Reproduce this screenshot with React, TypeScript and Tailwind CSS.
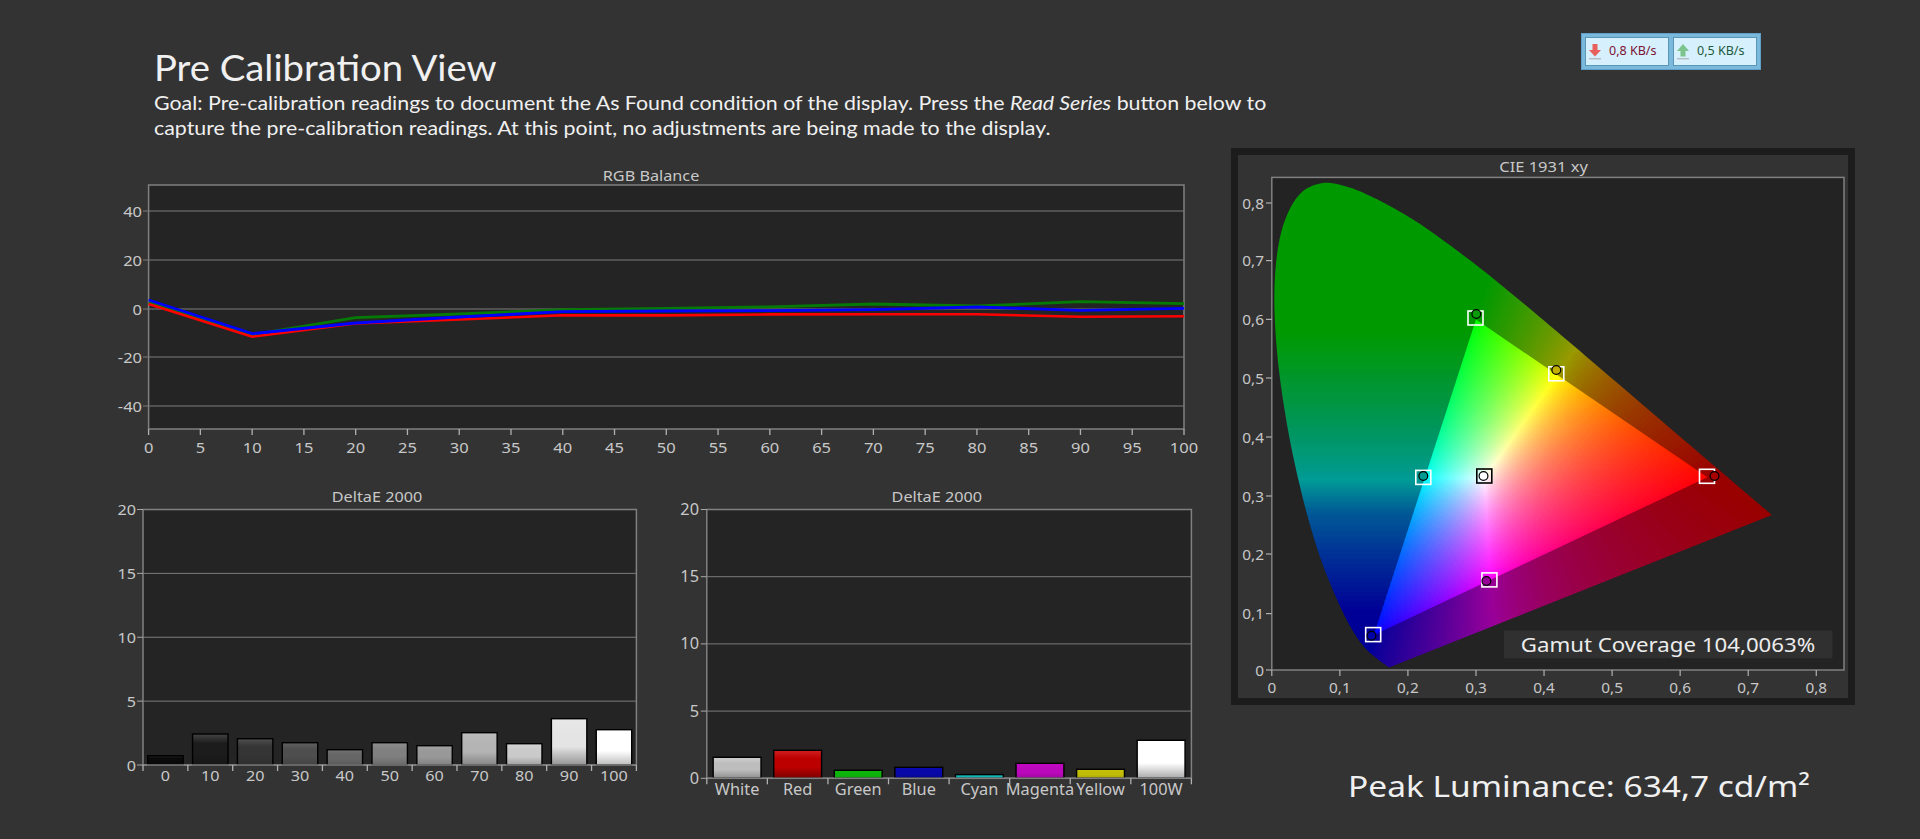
import type { ReactNode } from 'react'

const LABEL_FONT = '"Noto Sans", "Open Sans", sans-serif'

type Rgb = [number, number, number]
type Pt = [number, number]

// CIE 1931 spectral locus, xy
const LOCUS: Pt[] = [
  [0.1741, 0.005], [0.1714, 0.0051], [0.1644, 0.0109], [0.1566, 0.0177], [0.144, 0.0297], [0.1355, 0.0399],
  [0.1241, 0.0578], [0.1096, 0.0868], [0.0913, 0.1327], [0.0687, 0.2007], [0.0454, 0.295], [0.0235, 0.4127],
  [0.0082, 0.5384], [0.0039, 0.6548], [0.0139, 0.7502], [0.0389, 0.812], [0.0743, 0.8338], [0.1142, 0.8262],
  [0.1547, 0.8059], [0.1929, 0.7816], [0.2296, 0.7543], [0.3016, 0.6923], [0.3731, 0.6245], [0.4441, 0.5547],
  [0.5125, 0.4866], [0.5752, 0.4242], [0.627, 0.3725], [0.6658, 0.334], [0.6915, 0.3083], [0.7347, 0.2653],
]

function smooth(pts: Pt[]) {
  const out: Pt[] = []
  for (let i = 0; i < pts.length - 1; i++) {
    const p0 = pts[Math.max(i - 1, 0)]
    const p1 = pts[i]
    const p2 = pts[i + 1]
    const p3 = pts[Math.min(i + 2, pts.length - 1)]
    for (let s = 0; s < 8; s++) {
      const t = s / 8
      const t2 = t * t
      const t3 = t2 * t
      out.push([
        0.5 * (2 * p1[0] + (p2[0] - p0[0]) * t + (2 * p0[0] - 5 * p1[0] + 4 * p2[0] - p3[0]) * t2 + (3 * p1[0] - p0[0] - 3 * p2[0] + p3[0]) * t3),
        0.5 * (2 * p1[1] + (p2[1] - p0[1]) * t + (2 * p0[1] - 5 * p1[1] + 4 * p2[1] - p3[1]) * t2 + (3 * p1[1] - p0[1] - 3 * p2[1] + p3[1]) * t3),
      ])
    }
  }
  out.push(pts[pts.length - 1])
  return out
}

const cieX = (x: number) => 1271.8 + x * 680.6
const cieY = (y: number) => 670 - y * 584

// tick rows as they sit in the picture, 0 to 0,8
const CIE_TICKS_Y = [670, 613.6, 554, 496, 437, 378, 319.4, 260.6, 203]

const LEFT_BANDS: [number, Rgb][] = [
  [0.9, [0, 153, 0]],
  [0.58, [0, 153, 0]],
  [0.45, [0, 150, 70]],
  [0.36, [0, 152, 125]],
  [0.325, [0, 155, 150]],
  [0.27, [0, 90, 150]],
  [0.2, [0, 50, 150]],
  [0.1, [0, 0, 150]],
  [0, [0, 0, 150]],
]

function cieColor(x: number, y: number, bright: boolean): Rgb {
  const X = x / y
  const Z = (1 - x - y) / y
  const r = 3.2406 * X - 1.5372 - 0.4986 * Z
  const g = -0.9689 * X + 1.8758 + 0.0415 * Z
  const b = 0.0557 * X - 0.204 + 1.057 * Z

  if (!bright && r < 0) {
    for (let i = 1; i < LEFT_BANDS.length; i++) {
      const [y0, c0] = LEFT_BANDS[i - 1]
      const [y1, c1] = LEFT_BANDS[i]
      if (y >= y1) {
        const t = (y - y1) / (y0 - y1)
        return [c1[0] + (c0[0] - c1[0]) * t, c1[1] + (c0[1] - c1[1]) * t, c1[2] + (c0[2] - c1[2]) * t]
      }
    }
    return [0, 0, 150]
  }

  const dim = bright ? 1 : 0.6
  const cr = Math.max(r, 0)
  const cg = Math.max(g, 0)
  const cb = Math.max(b, 0)
  const m = Math.max(cr, cg, cb)
  const p = 0.85
  return [255 * dim * Math.pow(cr / m, p), 255 * dim * Math.pow(cg / m, p), 255 * dim * Math.pow(cb / m, p)]
}

function buildCells(bright: boolean, x0: number, x1: number, y0: number, y1: number) {
  const cells: { x: number; y: number; w: number; fill: string }[] = []
  const step = 2
  for (let py = y0; py < y1; py += step) {
    let start = x0
    let last = ''
    for (let px = x0; px <= x1; px += step) {
      const x = (px + 1 - 1271.8) / 680.6
      const y = (670 - py - 1) / 584
      const [r, g, b] = cieColor(x, Math.max(y, 0.002), bright)
      const fill = `rgb(${Math.round(r / 3) * 3},${Math.round(g / 3) * 3},${Math.round(b / 3) * 3})`
      if (fill !== last) {
        if (last) cells.push({ x: start, y: py, w: px - start, fill: last })
        start = px
        last = fill
      }
    }
    cells.push({ x: start, y: py, w: x1 + step - start, fill: last })
  }
  return cells
}

const dimCells = buildCells(false, 1272, 1780, 180, 672)
const brightCells = buildCells(true, 1366, 1714, 312, 642)

const RGB_X = (v: number) => 148.6 + v * 10.354
const greenLine: Pt[] = [[0, 302.6], [10, 334.7], [20, 317.7], [30, 314], [40, 309.7], [50, 308.3], [60, 306.8], [70, 304], [80, 306], [90, 301.7], [100, 303.7]]
const redLine: Pt[] = [[0, 304], [10, 336.7], [20, 323.5], [30, 319.5], [40, 315.3], [50, 315.4], [60, 314.4], [70, 314.3], [80, 314.3], [90, 316.7], [100, 316.3]]
const blueLine: Pt[] = [[0, 300], [10, 333.7], [20, 323], [30, 317], [40, 311.7], [50, 311], [60, 310.6], [70, 309.7], [80, 307], [90, 310.3], [100, 308.3]]

const line = (pts: Pt[]) => pts.map(([v, y]) => `${RGB_X(v)},${y}`).join(' ')

const grayBars = [
  { label: '0', h: 9.3, top: '#222222', mid: '#0a0a0a', bottom: '#050505' },
  { label: '10', h: 31, top: '#444444', mid: '#1c1c1c', bottom: '#161616' },
  { label: '20', h: 26.3, top: '#505050', mid: '#353535', bottom: '#2e2e2e' },
  { label: '30', h: 22.3, top: '#606060', mid: '#4e4e4e', bottom: '#444444' },
  { label: '40', h: 15.3, top: '#747474', mid: '#666666', bottom: '#5a5a5a' },
  { label: '50', h: 22.3, top: '#8e8e8e', mid: '#808080', bottom: '#6a6a6a' },
  { label: '60', h: 19.3, top: '#a2a2a2', mid: '#989898', bottom: '#808080' },
  { label: '70', h: 32.3, top: '#bcbcbc', mid: '#b4b4b4', bottom: '#858585' },
  { label: '80', h: 21.3, top: '#d2d2d2', mid: '#cacaca', bottom: '#a0a0a0' },
  { label: '90', h: 46.3, top: '#e8e8e8', mid: '#e4e4e4', bottom: '#959595' },
  { label: '100', h: 35.3, top: '#ffffff', mid: '#ffffff', bottom: '#bdbdbd' },
]

const colorBars = [
  { label: 'White', h: 21, top: '#cfcfcf', mid: '#bdbdbd', bottom: '#8e8e8e' },
  { label: 'Red', h: 28, top: '#d02020', mid: '#bc0000', bottom: '#7c0000' },
  { label: 'Green', h: 8, top: '#0cbc0c', mid: '#0cb40c', bottom: '#08a008' },
  { label: 'Blue', h: 11, top: '#0808b4', mid: '#0808a8', bottom: '#06068c' },
  { label: 'Cyan', h: 3.7, top: '#10b8b8', mid: '#10b8b8', bottom: '#10b8b8' },
  { label: 'Magenta', h: 15, top: '#c408c4', mid: '#bc08bc', bottom: '#a008a0' },
  { label: 'Yellow', h: 9, top: '#c8c408', mid: '#c0bc08', bottom: '#a8a408' },
  { label: '100W', h: 38, top: '#ffffff', mid: '#ffffff', bottom: '#a8a8a8' },
]

type Bar = { label: string; h: number; top: string; mid: string; bottom: string }

function Label({ x, y, size, anchor = 'middle', stretch = 1.1, fill = '#c8c8c8', children }: {
  x: number
  y: number
  size: number
  anchor?: 'start' | 'middle' | 'end'
  stretch?: number
  fill?: string
  children: ReactNode
}) {
  return (
    <text transform={`translate(${x} ${y}) scale(${stretch} 1)`} textAnchor={anchor} fontSize={size} fill={fill}>
      {children}
    </text>
  )
}

function BarChart({ id, viewX, left, right, bottom, titleX, labelEnd, labelBaseline, labelSize, stretch, bars }: {
  id: string
  viewX: number
  left: number
  right: number
  bottom: number
  titleX: number
  labelEnd: number
  labelBaseline: number
  labelSize: number
  stretch: number
  bars: Bar[]
}) {
  const top = 509.5
  const cw = (right - left) / bars.length
  return (
    <svg width={560} height={320} viewBox={`${viewX} 480 560 320`} style={{ fontFamily: LABEL_FONT }}>
      <defs>
        {bars.map((b, i) => (
          <linearGradient key={i} id={`${id}${i}`} x1="0" y1="0" x2="0" y2="1">
            <stop offset="0" stopColor={b.top} />
            <stop offset="0.3" stopColor={b.mid} />
            <stop offset="0.6" stopColor={b.mid} />
            <stop offset="1" stopColor={b.bottom} />
          </linearGradient>
        ))}
      </defs>
      <Label x={titleX} y={502} size={14.5} stretch={1.12}>DeltaE 2000</Label>
      <rect x={left} y={top} width={right - left} height={bottom - top} fill="#242424" stroke="#808080" strokeWidth={1.5} />
      {[0, 5, 10, 15, 20].map(v => {
        const y = bottom - (v / 20) * (bottom - top)
        return (
          <g key={v}>
            {v > 0 && v < 20 && <line x1={left} x2={right} y1={y} y2={y} stroke="#7c7c7c" strokeWidth={1} />}
            <line x1={left - 6} x2={left} y1={y} y2={y} stroke="#a8a8a8" strokeWidth={1} />
            <Label x={labelEnd} y={y + 5.5} size={labelSize} anchor="end" stretch={stretch}>{v}</Label>
          </g>
        )
      })}
      {bars.map((b, i) => {
        const w = cw * 0.79
        const x = left + cw * i + (cw - w) / 2
        return (
          <g key={b.label}>
            <rect x={x} y={bottom - b.h} width={w} height={b.h} fill={`url(#${id}${i})`} stroke="#000" strokeWidth={1.4} />
            <Label x={left + cw * (i + 0.5)} y={labelBaseline} size={labelSize} stretch={stretch}>{b.label}</Label>
          </g>
        )
      })}
      <line x1={left} x2={right} y1={bottom} y2={bottom} stroke="#808080" strokeWidth={1.5} />
      {Array.from({ length: bars.length + 1 }, (_, i) => (
        <line key={i} x1={left + cw * i} x2={left + cw * i} y1={bottom} y2={bottom + 6} stroke="#b0b0b0" strokeWidth={1.3} />
      ))}
    </svg>
  )
}

function RgbChart() {
  return (
    <svg width={1100} height={305} viewBox="110 160 1100 305" className="ml-[110px]" style={{ fontFamily: LABEL_FONT }}>
      <Label x={651} y={180.5} size={14.5} stretch={1.12}>RGB Balance</Label>
      <rect x={148.6} y={185} width={1035.4} height={244} fill="#242424" stroke="#808080" strokeWidth={1.5} />
      {[[40, 211], [20, 260], [0, 309], [-20, 357], [-40, 406]].map(([v, y]) => (
        <g key={v}>
          <line x1={143} x2={1184} y1={y} y2={y} stroke="#7c7c7c" strokeWidth={1.2} />
          <Label x={142} y={y + 6} size={15} anchor="end">{v}</Label>
        </g>
      ))}
      {Array.from({ length: 21 }, (_, i) => i * 5).map(v => (
        <g key={v}>
          <line x1={RGB_X(v)} x2={RGB_X(v)} y1={429} y2={435} stroke="#b0b0b0" strokeWidth={1.3} />
          <Label x={RGB_X(v)} y={453} size={15}>{v}</Label>
        </g>
      ))}
      <polyline points={line(greenLine)} fill="none" stroke="#067a06" strokeWidth={2.8} />
      <polyline points={line(redLine)} fill="none" stroke="#ff0000" strokeWidth={2.6} />
      <polyline points={line(blueLine)} fill="none" stroke="#0000ff" strokeWidth={2.8} />
    </svg>
  )
}

const markers = [
  { sx: 1475.5, sy: 318, cx: 1476.3, cy: 314, fill: '#0a9a0a', square: '#ffffff' },
  { sx: 1556.3, sy: 373.8, cx: 1556.3, cy: 370, fill: '#c4b000', square: '#ffffff' },
  { sx: 1423.3, sy: 477.4, cx: 1423.3, cy: 476, fill: '#009a90', square: '#ffffff' },
  { sx: 1707, sy: 476.3, cx: 1714.5, cy: 476, fill: '#a80000', square: '#ffffff' },
  { sx: 1489.4, sy: 579.9, cx: 1486.4, cy: 581, fill: '#960096', square: '#ffffff' },
  { sx: 1373.2, sy: 634.6, cx: 1371.5, cy: 635.7, fill: '#0000a8', square: '#ffffff' },
  { sx: 1484.3, sy: 476, cx: 1483.5, cy: 476, fill: '#ffffff', square: '#000000' },
]

function CieChart() {
  const locus = smooth(LOCUS).map(([x, y]) => `${cieX(x)},${cieY(y)}`).join(' ')
  const triangle = [[0.64, 0.33], [0.3, 0.6], [0.15, 0.06]].map(([x, y]) => `${cieX(x)},${cieY(y)}`).join(' ')
  return (
    <svg width={610} height={543} viewBox="1238 155 610 543" className="block" style={{ fontFamily: LABEL_FONT }}>
      <defs>
        <clipPath id="locus">
          <polygon points={locus} />
        </clipPath>
        <clipPath id="triangle">
          <polygon points={triangle} />
        </clipPath>
      </defs>
      <Label x={1543.5} y={172} size={15} stretch={1.1}>CIE 1931 xy</Label>
      <rect x={1271.8} y={177.4} width={572.2} height={492.6} fill="#232323" stroke="#808080" strokeWidth={1.5} />
      <g clipPath="url(#locus)">
        <g shapeRendering="crispEdges">
          {dimCells.map((c, i) => (
            <rect key={i} x={c.x} y={c.y} width={c.w} height={2} fill={c.fill} />
          ))}
        </g>
      </g>
      <g clipPath="url(#triangle)">
        <g shapeRendering="crispEdges">
          {brightCells.map((c, i) => (
            <rect key={i} x={c.x} y={c.y} width={c.w} height={2} fill={c.fill} />
          ))}
        </g>
      </g>
      {CIE_TICKS_Y.map((tickY, i) => {
        const label = i === 0 ? '0' : `0,${i}`
        return (
          <g key={i}>
            <line x1={1266} x2={1271.8} y1={tickY} y2={tickY} stroke="#b0b0b0" strokeWidth={1.2} />
            <Label x={1264} y={tickY + 5.5} size={14.5} anchor="end" stretch={1.06}>{label}</Label>
            <line x1={cieX(i / 10)} x2={cieX(i / 10)} y1={670} y2={676} stroke="#b0b0b0" strokeWidth={1.2} />
            <Label x={cieX(i / 10)} y={692.5} size={14.5} stretch={1.06}>{label}</Label>
          </g>
        )
      })}
      {markers.map((m, i) => (
        <g key={i}>
          <rect x={m.sx - 7.5} y={m.sy - 7} width={15} height={14} fill="none" stroke={m.square} strokeWidth={1.6} />
          <circle cx={m.cx} cy={m.cy} r={4.4} fill={m.fill} stroke="#000" strokeWidth={1.2} />
        </g>
      ))}
      <rect x={1504} y={630.6} width={328.4} height={27.7} fill="#303030" />
      <Label x={1668} y={651.5} size={20.5} stretch={1.085} fill="#ececec">Gamut Coverage 104,0063%</Label>
    </svg>
  )
}

function SpeedCell({ value, up }: { value: string; up?: boolean }) {
  return (
    <div className="flex items-center h-[29px] w-[84px] bg-[#d6f0fd] border border-[#5a96b6] pl-[2px]">
      <svg width={14} height={18} viewBox="0 0 14 18" className="shrink-0">
        {up ? (
          <path d="M7 1 L13 8 H9.5 V13.5 H4.5 V8 H1 Z" fill="#7cc48c" />
        ) : (
          <path d="M4.5 1 H9.5 V7 H13 L7 13.5 L1 7 H4.5 Z" fill="#e8605c" />
        )}
        <rect x={1} y={15} width={12} height={1.4} fill="#b4bcc0" />
      </svg>
      <span
        className={`ml-[7px] text-[12.5px] whitespace-nowrap ${up ? 'text-[#1d5a3c]' : 'text-[#7c1232]'}`}
        style={{ fontFamily: LABEL_FONT }}
      >
        {value}
      </span>
    </div>
  )
}

export default function App() {
  return (
    <div className="flex w-[1920px] h-[839px] bg-[#333333] overflow-hidden">
      <div className="w-[1231px] shrink-0">
        <div className="h-[160px] pl-[154px] pt-[46px] text-[#f0f0f0] font-['Lato',sans-serif]">
          <h1 className="text-[36px] leading-[42px] font-normal origin-left scale-x-[1.063]">Pre Calibration View</h1>
          <p className="text-[20px] leading-[25px] mt-[2px] whitespace-nowrap origin-left scale-x-[1.068]">
            Goal: Pre-calibration readings to document the As Found condition of the display. Press the <em>Read Series</em> button below to
            <br />
            capture the pre-calibration readings. At this point, no adjustments are being made to the display.
          </p>
        </div>
        <RgbChart />
        <div className="flex mt-[15px] ml-[100px]">
          <BarChart id="gray" viewX={100} left={143} right={636.4} bottom={765} titleX={377} labelEnd={136} labelBaseline={781} labelSize={15} stretch={1.08} bars={grayBars} />
          <BarChart id="color" viewX={660} left={706.8} right={1191.4} bottom={778.3} titleX={936.8} labelEnd={699} labelBaseline={795} labelSize={16} stretch={1.02} bars={colorBars} />
        </div>
      </div>
      <div className="flex flex-col w-[624px] shrink-0">
        <div className="h-[148px] pt-[33px] pl-[350px]">
          <div className="flex gap-[4px] w-[180px] h-[37px] p-[3px] bg-[#7ab8dc] border border-[#5f9fc8]">
            <SpeedCell value="0,8 KB/s" />
            <SpeedCell value="0,5 KB/s" up />
          </div>
        </div>
        <div className="h-[557px] border-[7px] border-[#1c1c1c] bg-[#333333]">
          <CieChart />
        </div>
        <p className="mt-[61px] ml-[117px] text-[29.5px] leading-[40px] text-[#f0f0f0] whitespace-nowrap origin-left scale-x-[1.135]" style={{ fontFamily: LABEL_FONT }}>
          Peak Luminance: 634,7 cd/m²
        </p>
      </div>
    </div>
  )
}
